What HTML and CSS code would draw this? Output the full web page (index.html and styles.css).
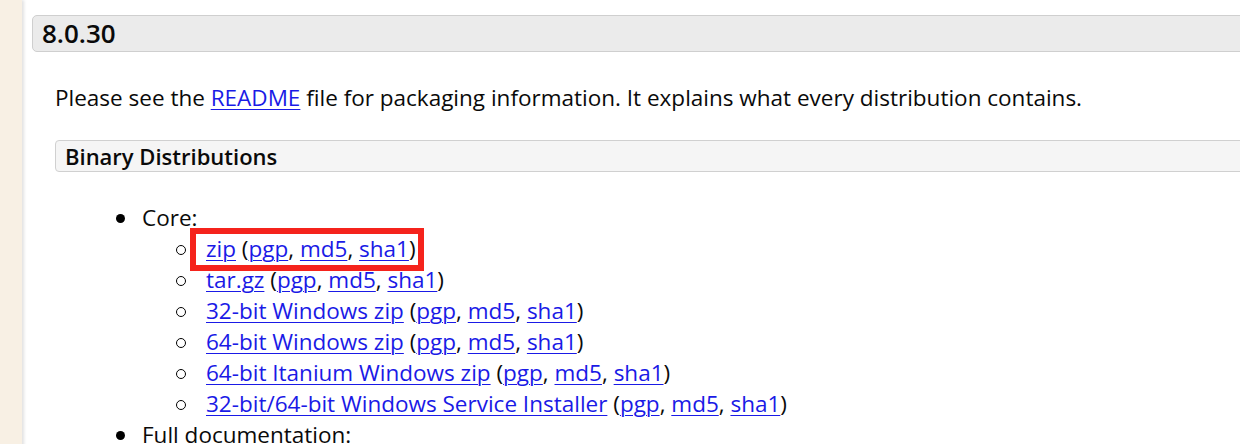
FILE: index.html
```html
<!DOCTYPE html>
<html>
<head>
<meta charset="utf-8">
<link rel="stylesheet" href="styles.css">
</head>
<body>
<div class="page">
  <div class="side"></div>
  <div class="main">
    <h2 class="version">8.0.30</h2>
    <div class="section">
      <p class="intro">Please see the <a href="#">README</a> file for packaging information. It explains what every distribution contains.</p>
      <h3 class="sub">Binary Distributions</h3>
      <ul class="list">
        <li>Core:
          <ul class="inner">
            <li class="marked"><a href="#">zip</a> (<a href="#">pgp</a>, <a href="#">md5</a>, <a href="#">sha1</a>)<span class="highlight"></span></li>
            <li><a href="#">tar.gz</a> (<a href="#">pgp</a>, <a href="#">md5</a>, <a href="#">sha1</a>)</li>
            <li><a href="#">32-bit Windows zip</a> (<a href="#">pgp</a>, <a href="#">md5</a>, <a href="#">sha1</a>)</li>
            <li><a href="#">64-bit Windows zip</a> (<a href="#">pgp</a>, <a href="#">md5</a>, <a href="#">sha1</a>)</li>
            <li><a href="#">64-bit Itanium Windows zip</a> (<a href="#">pgp</a>, <a href="#">md5</a>, <a href="#">sha1</a>)</li>
            <li><a href="#">32-bit/64-bit Windows Service Installer</a> (<a href="#">pgp</a>, <a href="#">md5</a>, <a href="#">sha1</a>)</li>
          </ul>
        </li>
        <li>Full documentation:</li>
      </ul>
    </div>
  </div>
</div>
</body>
</html>
```
FILE: styles.css
```css
html, body {
  margin: 0;
  padding: 0;
  background: #fff;
  overflow: hidden;
}
body {
  font-family: "Open Sans", "DejaVu Sans", sans-serif;
  color: #0a0a0a;
  width: 1240px;
  height: 444px;
}
.page {
  display: flex;
  width: 1300px;
  min-height: 444px;
}
.side {
  width: 22px;
  flex: none;
  background: #f8f0e4;
  box-shadow: 2px 0 3px rgba(0,0,0,0.12);
  margin-right: 4px;
}
.main {
  flex: 1;
  padding: 15px 0 0 6px;
}
.version {
  margin: 0;
  font-size: 26px;
  font-weight: 600;
  line-height: 35px;
  padding: 0 9px;
  background: #ebebeb;
  border: 1px solid #cfcfcf;
  border-radius: 5px;
}
.section {
  padding-left: 23px;
}
.intro {
  margin: 0;
  padding-top: 30px;
  font-size: 22.5px;
  line-height: 31px;
}
a {
  color: #1a1ae6;
  text-decoration: underline;
  text-decoration-thickness: 1px;
  text-underline-offset: 3px;
}
.sub {
  margin: 27px 0 0;
  font-size: 22px;
  font-weight: 600;
  line-height: 30px;
  padding: 0 9px;
  background: #f5f5f5;
  border: 1px solid #d0d0d0;
  border-radius: 4px;
}
.list {
  margin: 30px 0 0;
  padding-left: 87px;
  font-size: 22.5px;
  line-height: 31px;
  list-style: none;
}
.list > li::before {
  content: "";
  display: inline-block;
  width: 9px;
  height: 9px;
  border-radius: 50%;
  background: #000;
  margin-left: -26px;
  margin-right: 17px;
  vertical-align: middle;
  position: relative;
  top: -1px;
}
.inner {
  margin: 0;
  padding-left: 64px;
  list-style: none;
}
.inner > li::before {
  content: "";
  display: inline-block;
  box-sizing: border-box;
  width: 10px;
  height: 10px;
  border-radius: 50%;
  border: 1.5px solid #000;
  margin-left: -30px;
  margin-right: 20px;
  vertical-align: middle;
  position: relative;
  top: -1px;
}
.marked {
  position: relative;
}
.highlight {
  position: absolute;
  left: -16px;
  top: -5px;
  width: 222px;
  height: 31px;
  border: 6px solid #f5231c;
  pointer-events: none;
}
```
